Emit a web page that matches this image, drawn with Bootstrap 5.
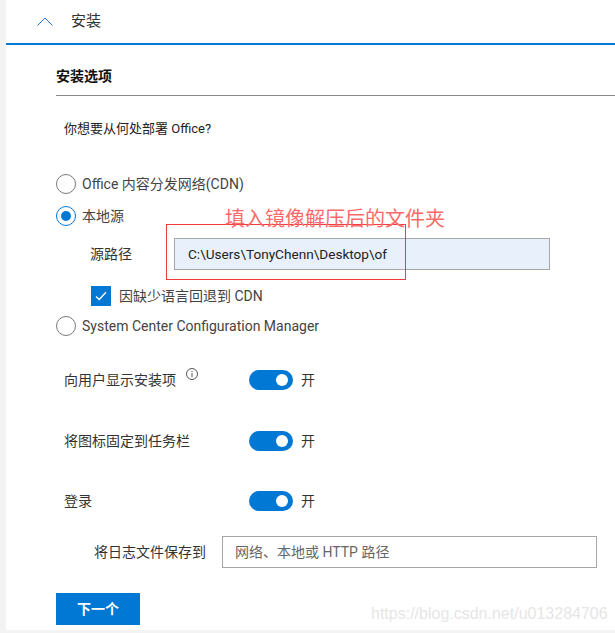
<!DOCTYPE html>
<html lang="zh-CN">
<head>
    <meta charset="UTF-8">
    <meta name="viewport" content="width=device-width, initial-scale=1.0">
    <title>安装</title>
    <link href="https://cdn.jsdelivr.net/npm/bootstrap@5.3.0/dist/css/bootstrap.min.css" rel="stylesheet">
    <style>
        html, body { height: 100%; }
        body {
            background: #f3f3f3;
            color: #333;
            font-family: Roboto, "Noto Sans CJK SC", sans-serif;
            font-size: 14px;
            overflow: hidden;
        }
        .panel-box {
            position: relative;
            margin-left: 6px;
            height: 630px;
            background: #fff;
        }
        .panel-head {
            height: 45px;
            padding: 0 0 0 31px;
            border-bottom: 2px solid #0078d4;
            font-size: 15px;
            gap: 18px;
        }
        .panel-body { padding: 0 0 0 50px; }
        .sect-title {
            height: 51px;
            padding: 21px 0 0;
            border-bottom: 1px solid #8a8a8a;
            font-weight: 700;
            font-size: 14px;
            color: #111;
            line-height: 21px;
        }
        .ask-line { margin: 23px 0 0 8px; height: 20px; font-size: 13px; line-height: 20px; color: #222; }
        .radio-row { height: 20px; gap: 6px; line-height: 20px; color: #444; }
        .radio-dot {
            width: 20px; height: 20px;
            border: 1px solid #7a7a7a;
            border-radius: 50%;
            flex: none;
        }
        .radio-dot.on { border-color: #0078d4; padding: 4px; }
        .radio-dot.on::before {
            content: "";
            display: block;
            width: 10px; height: 10px;
            border-radius: 50%;
            background: #0078d4;
        }
        .radio-first { margin-top: 35px; }
        .radio-second { margin-top: 12px; }
        .path-row { margin: 12px 0 0 34px; height: 32px; }
        .path-label { width: 84px; color: #333; }
        .path-input {
            width: 376px; height: 32px;
            padding: 0 13px;
            background: #e8f0fb;
            border: 1px solid #a6a6a6;
            font-size: 13.6px;
            line-height: 30px;
            color: #222;
        }
        .check-row { margin: 16px 0 0 35px; height: 20px; gap: 8px; color: #444; }
        .check-box {
            width: 20px; height: 20px;
            background: #0078d4;
            flex: none;
        }
        .radio-third { margin-top: 10px; }
        .switch-row { margin-left: 8px; height: 20px; color: #333; }
        .switch-label { width: 185px; }
        .info-icon { margin: -12px 0 0 10px; }
        .switch-pill {
            width: 44px; height: 20px;
            border-radius: 10px;
            background: #0078d4;
            padding: 4px 5px 4px 0;
            margin-right: 8px;
            flex: none;
        }
        .switch-pill::before {
            content: "";
            display: block;
            width: 12px; height: 12px;
            margin-left: auto;
            border-radius: 50%;
            background: #fff;
        }
        .sw-one { margin-top: 34px; }
        .sw-two { margin-top: 41px; }
        .sw-three { margin-top: 40px; }
        .log-row { margin: 25px 0 0 38px; height: 32px; }
        .log-label { width: 128px; color: #333; }
        .log-input {
            width: 375px; height: 32px;
            padding: 0 12px;
            border: 1px solid #a6a6a6;
            line-height: 30px;
            color: #666;
        }
        .next-btn {
            display: block;
            width: 84px; height: 32px;
            margin-top: 25px;
            border: 0;
            border-radius: 0;
            background: #0078d4;
            color: #fff;
            font-size: 14px;
            font-weight: 700;
            padding: 0;
        }
        .red-frame {
            position: absolute;
            left: 160px; top: 224px;
            width: 240px; height: 56px;
            border: 1px solid #f03c3c;
        }
        .red-note {
            position: absolute;
            left: 219px; top: 206px;
            font-size: 20px;
            line-height: 26px;
            color: #fb6a6a;
            white-space: nowrap;
        }
        .water-mark {
            position: absolute;
            left: 365px; top: 603px;
            font-family: "Liberation Sans", sans-serif;
            font-size: 16px;
            line-height: 22px;
            color: #e6e6e6;
            white-space: nowrap;
        }
    </style>
</head>
<body>
    <div class="panel-box">
        <div class="panel-head d-flex align-items-center">
            <svg width="16" height="9" viewBox="0 0 16 9" fill="none"><path d="M0.5 8.5 L8 1 L15.5 8.5" stroke="#2b6fd6" stroke-width="1"/></svg>
            <span>安装</span>
        </div>
        <div class="panel-body">
            <div class="sect-title">安装选项</div>
            <div class="ask-line">你想要从何处部署 Office?</div>

            <div class="radio-row radio-first d-flex align-items-center"><span class="radio-dot"></span><span>Office 内容分发网络(CDN)</span></div>
            <div class="radio-row radio-second d-flex align-items-center"><span class="radio-dot on"></span><span>本地源</span></div>
            <div class="path-row d-flex align-items-center">
                <span class="path-label">源路径</span>
                <div class="path-input">C:\Users\TonyChenn\Desktop\of</div>
            </div>
            <div class="check-row d-flex align-items-center">
                <span class="check-box d-flex align-items-center justify-content-center">
                    <svg width="12" height="10" viewBox="0 0 12 10" fill="none"><path d="M1 5.5 L4.2 8.5 L11 1.2" stroke="#fff" stroke-width="1.3"/></svg>
                </span>
                <span>因缺少语言回退到 CDN</span>
            </div>
            <div class="radio-row radio-third d-flex align-items-center"><span class="radio-dot"></span><span>System Center Configuration Manager</span></div>

            <div class="switch-row sw-one d-flex align-items-center">
                <span class="switch-label d-flex align-items-center">向用户显示安装项
                    <svg class="info-icon" width="12" height="12" viewBox="0 0 12 12" fill="none"><circle cx="6" cy="6" r="5.5" stroke="#555"/><path d="M6 5 V9 M6 3 V4" stroke="#555"/></svg>
                </span>
                <span class="switch-pill"></span><span>开</span>
            </div>
            <div class="switch-row sw-two d-flex align-items-center">
                <span class="switch-label">将图标固定到任务栏</span>
                <span class="switch-pill"></span><span>开</span>
            </div>
            <div class="switch-row sw-three d-flex align-items-center">
                <span class="switch-label">登录</span>
                <span class="switch-pill"></span><span>开</span>
            </div>
            <div class="log-row d-flex align-items-center">
                <span class="log-label">将日志文件保存到</span>
                <div class="log-input">网络、本地或 HTTP 路径</div>
            </div>
            <button type="button" class="btn next-btn">下一个</button>
        </div>

        <div class="red-frame"></div>
        <div class="red-note">填入镜像解压后的文件夹</div>
        <div class="water-mark">https://blog.csdn.net/u013284706</div>
    </div>
    <script src="https://cdn.jsdelivr.net/npm/bootstrap@5.3.0/dist/js/bootstrap.bundle.min.js"></script>
</body>
</html>
